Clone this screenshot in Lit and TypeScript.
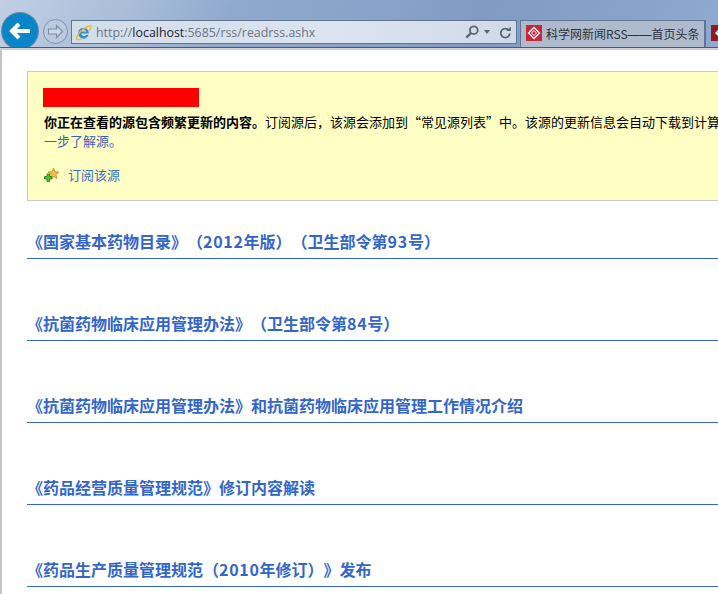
import { LitElement, html, css } from "lit";
import { customElement } from "lit/decorators.js";

const items = [
  ["《国家基本药物目录》（", "2012", "年版）（卫生部令第", "93", "号）"],
  ["《抗菌药物临床应用管理办法》（卫生部令第", "84", "号）"],
  ["《抗菌药物临床应用管理办法》和抗菌药物临床应用管理工作情况介绍"],
  ["《药品经营质量管理规范》修订内容解读"],
  ["《药品生产质量管理规范（", "2010", "年修订）》发布"],
];

@customElement("app-root")
export class AppRoot extends LitElement {
  static styles = css`
    :host {
      display: block;
      width: 718px;
      height: 594px;
      overflow: hidden;
      background: #fff;
      font-family: "Noto Sans CJK SC", "Liberation Sans", sans-serif;
      text-spacing-trim: space-all;
    }
    .chrome {
      height: 48px;
      box-sizing: border-box;
      display: flex;
      align-items: flex-start;
      overflow: hidden;
      background: linear-gradient(115deg, #c0cfe3 0%, #a9bdd9 18%, #8fa9cd 32%, #87a2c8 55%, #7f9bc4 66%, #8fa9d0 100%);
      border-bottom: 1px solid #4a5a70;
      padding: 13px 0 0 2px;
    }
    .back {
      width: 36px;
      height: 36px;
      flex: none;
      border-radius: 50%;
      background: #0a86c8;
      box-shadow: 0 0 0 1px #6d88a8;
      display: flex;
      align-items: center;
      justify-content: center;
    }
    .fwd {
      width: 25px;
      height: 25px;
      box-sizing: border-box;
      flex: none;
      margin: 6px 0 0 5px;
      border-radius: 50%;
      border: 1px solid #7f93ad;
      background: rgba(190, 205, 225, 0.55);
      display: flex;
      align-items: center;
      justify-content: center;
    }
    .addr {
      width: 446px;
      height: 24px;
      box-sizing: border-box;
      flex: none;
      margin: 7px 0 0 3px;
      border: 1px solid #5f7592;
      background: linear-gradient(90deg, #d3deeb, #dbe4f0 60%, #cfdae9);
      display: flex;
      align-items: center;
      padding: 0 5px 0 3px;
      font-family: "Open Sans", "Liberation Sans", sans-serif;
      font-size: 12.4px;
      color: #6c7480;
      white-space: nowrap;
    }
    .addr b { font-weight: normal; color: #1b2430; }
    .url { margin-left: 4px; flex: 1; }
    .addr svg { flex: none; }
    .drop { margin: 0 9px 0 5px; }
    .tab {
      flex: none;
      height: 28px;
      box-sizing: border-box;
      margin: 7px 0 0 3px;
      width: 185px;
      border: 1px solid #5f7592;
      border-bottom: none;
      background: #aebbcd;
      display: flex;
      align-items: center;
      padding: 0 0 3px 5px;
      gap: 4px;
      font-size: 12px;
      color: #2c333c;
      white-space: nowrap;
      overflow: hidden;
    }
    .dash { font-family: "Liberation Sans", sans-serif; }
    .fav {
      width: 16px;
      height: 16px;
      flex: none;
      background: #c5283c;
      display: flex;
      align-items: center;
      justify-content: center;
    }
    .tab2 {
      flex: none;
      margin: 7px 0 0 0;
      height: 28px;
      width: 30px;
      box-sizing: border-box;
      border-left: 1px solid #5f7592;
      padding: 5px 0 0 5px;
    }
    .fav2 {
      width: 16px;
      height: 16px;
      background: #8e1b1f;
      display: flex;
      align-items: center;
      justify-content: center;
    }
    .rule { height: 2px; background: #cfd3d8; }
    .page {
      border-left: 2px solid #c4c4c4;
      height: 544px;
      box-sizing: border-box;
      padding: 21px 0 0 25px;
      overflow: hidden;
    }
    .box {
      width: 800px;
      height: 130px;
      box-sizing: border-box;
      background: #ffffc3;
      border: 1px solid #c8c8c8;
      padding: 16px 0 0 16px;
      font-size: 13px;
      line-height: 19px;
      color: #000;
    }
    .redact {
      width: 156px;
      height: 19px;
      background: #ff0000;
      margin: 0 0 5px -1px;
    }
    .msg { white-space: nowrap; }
    .msg strong { font-weight: bold; }
    a { text-decoration: none; }
    .msg a { color: #3b62bb; }
    .sub {
      display: flex;
      align-items: center;
      gap: 9px;
      margin-top: 15px;
    }
    .sub a { color: #3b6cc4; }
    .list { margin: -24px 0 0; padding: 0; list-style: none; width: 800px; }
    .list li {
      height: 82px;
      box-sizing: border-box;
      display: flex;
      align-items: flex-end;
    }
    .list a {
      display: block;
      width: 100%;
      box-sizing: border-box;
      border-bottom: 1px solid #3366cc;
      font-size: 16px;
      font-weight: bold;
      line-height: 22px;
      height: 29px;
      color: #3366cc;
      white-space: nowrap;
    }
    .num { letter-spacing: 0.7px; }
  `;

  render() {
    return html`
      <div class="chrome">
        <div class="back">
          <svg width="22" height="20" viewBox="0 0 22 20"><path d="M10 3 3 10l7 7M3.500 10H21" fill="none" stroke="#fff" stroke-width="4"/></svg>
        </div>
        <div class="fwd">
          <svg width="17" height="15" viewBox="0 0 17 15"><path d="M9.500 1.500 15.500 7.500 9.500 13.500V10H1.500V5H9.500z" fill="#cdd8e6" stroke="#7a8ca5" stroke-width="1.200"/></svg>
        </div>
        <div class="addr">
          <svg width="17" height="17" viewBox="0 0 17 17">
            <path d="M3.200 8.800a5.300 5.300 0 0 1 10.500-.3v1H6.300a2.700 2.700 0 0 0 5 1.200h2.300a5.300 5.300 0 0 1-10.400-1.900zM6.300 7.500h4.900a2.500 2.500 0 0 0-4.900 0z" fill="#2e8fd8"/>
            <path d="M2 15.500C.5 14 4 7.500 9 4.500c3.500-2 6.800-3.500 7-1.800.1 1.200-1 3-2 4.300M2 15.500c1 .8 3.500-.2 5-1" fill="none" stroke="#f2b51d" stroke-width="1.300"/>
          </svg>
          <span class="url">http://<b>localhost</b>:5685/rss/readrss.ashx</span>
          <svg width="14" height="14" viewBox="0 0 14 14"><circle cx="8.800" cy="5.200" r="3.900" fill="none" stroke="#5a6470" stroke-width="1.800"/><path d="M6 8 1.300 12.700" stroke="#5a6470" stroke-width="2.400"/></svg>
          <svg class="drop" width="6" height="4" viewBox="0 0 6 4"><path d="M0 0h6L3 4z" fill="#5a6470"/></svg>
          <svg width="12" height="13" viewBox="0 0 12 13"><path d="M10 4.500a4.500 4.500 0 1 0 .8 3" fill="none" stroke="#5a6470" stroke-width="1.800"/><path d="M7.500 5h4.300V.5z" fill="#5a6470"/></svg>
        </div>
        <div class="tab">
          <span class="fav"><svg width="14" height="14" viewBox="0 0 14 14"><path d="M7 1.500 12.500 7 7 12.500 1.500 7z" fill="none" stroke="#fff" stroke-width="1.300"/><path d="M7 4.500 9.500 7 7 9.500 4.500 7z" fill="none" stroke="#fff"/></svg></span>
          <span>科学网新闻RSS<span class="dash">——</span>首页头条</span>
        </div>
        <div class="tab2">
          <div class="fav2"><svg width="10" height="10" viewBox="0 0 10 10"><path d="M5 1 9 5 5 9 1 5z" fill="#fff"/><circle cx="5" cy="5" r="1.300" fill="#8e1b1f"/></svg></div>
        </div>
      </div>
      <div class="rule"></div>
      <div class="page">
        <div class="box">
          <div class="redact"></div>
          <div class="msg"><strong>你正在查看的源包含频繁更新的内容。</strong>订阅源后，该源会添加到“常见源列表”中。该源的更新信息会自动下载到计算</div>
          <div class="msg"><a>一步了解源。</a></div>
          <div class="sub">
            <svg width="15" height="15" viewBox="0 0 15 15">
              <path d="M9.500 1 11 4.800l3.800.3-2.900 2.500.9 3.900-3.300-2-3.300 2 .9-3.900L4.200 5.100 8 4.800z" fill="#f3c04a" stroke="#b8862a" stroke-width=".8"/>
              <path d="M3 7h2.500v2.500H8V12H5.500v2.500H3V12H.5V9.500H3z" fill="#52c22e" stroke="#1d7a1d" stroke-width=".8"/>
            </svg>
            <a>订阅该源</a>
          </div>
        </div>
        <ul class="list">
          ${items.map(
            (parts) => html`<li><a>${parts.map((p) => (/^\d+$/.test(p) ? html`<span class="num">${p}</span>` : p))}</a></li>`
          )}
        </ul>
      </div>
    `;
  }
}
